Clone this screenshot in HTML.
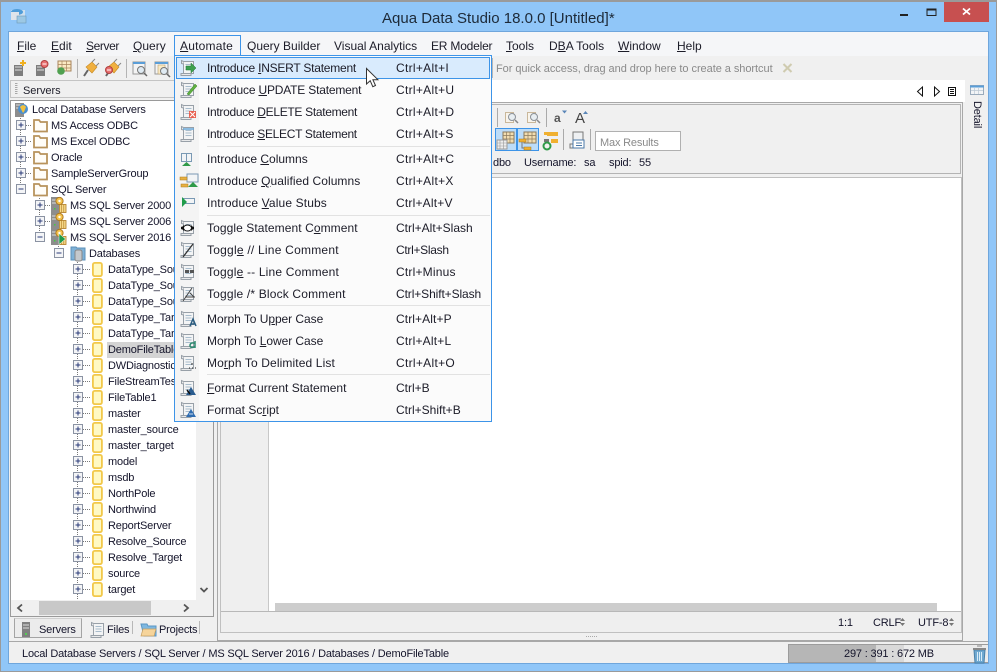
<!DOCTYPE html>
<html><head><meta charset="utf-8"><title>Aqua Data Studio</title>
<style>
html,body{margin:0;padding:0;background:#90c6f8}
#w{position:relative;width:997px;height:672px;overflow:hidden;background:#90c6f8;font-family:"Liberation Sans",sans-serif;font-size:12px;color:#1c1c28}
.b{position:absolute;box-sizing:border-box}
.t{position:absolute;white-space:nowrap;line-height:16px;height:16px}
.tr{font-size:11px;letter-spacing:-.17px;color:#14142a;margin-top:1px}
.q{font-size:11px;letter-spacing:-.05px;margin-top:1px}
svg.o{position:absolute;left:0;top:0}
u{text-decoration:underline;text-underline-offset:1px}
</style></head><body><div id="w">
<div class="b" style="left:0;top:0;width:997px;height:672px;border:1px solid #9a9a9a;border-top-width:2px"></div>
<div class="b" style="left:8px;top:31px;width:981px;height:633px;background:#f0f0f0;border:1px solid #6fa6dc"></div>
<div class="b" style="left:9px;top:32px;width:979px;height:24px;background:#f5f6f8"></div>
<div class="b" style="left:944px;top:2px;width:45px;height:20px;background:#c75050"></div>
<div class="t" style="left:382px;top:10px;font-size:15px;line-height:18px;height:18px;color:#1d2a38">Aqua Data Studio 18.0.0 [Untitled]*</div>

<div class="b" style="left:10px;top:80px;width:204px;height:18px;background:#f0f0f0;border:1px solid #c4c4c4"></div>
<div class="b" style="left:10px;top:100px;width:204px;height:517px;background:#f0f0f0;border:1px solid #9a9a9a"></div>
<div class="b" style="left:11px;top:101px;width:185px;height:499px;background:#fff"></div>
<div class="b" style="left:39px;top:601px;width:112px;height:14px;background:#c8c8c8"></div>
<div class="b" style="left:107px;top:342px;width:80px;height:16px;background:#d4d4d4"></div>

<div class="b" style="left:220px;top:80px;width:745px;height:22px;background:#fff"></div>
<div class="b" style="left:217px;top:102px;width:746px;height:539px;border:1px solid #a8a8a8"></div>
<div class="b" style="left:219px;top:104px;width:742px;height:70px;border:1px solid #b4b4b4"></div>
<div class="b" style="left:220px;top:177px;width:742px;height:456px;background:#efefef;border:1px solid #c0c0c0"></div>
<div class="b" style="left:268px;top:178px;width:693px;height:433px;background:#fff;border-left:1px solid #c8c8c8"></div>
<div class="b" style="left:221px;top:611px;width:740px;height:1px;background:#b8b8b8"></div>
<div class="b" style="left:275px;top:603px;width:662px;height:8px;background:#cdcdcd"></div>
<div class="b" style="left:595px;top:131px;width:86px;height:20px;background:#fff;border:1px solid #b0b0b0"></div>
<div class="b" style="left:495px;top:128px;width:22px;height:23px;background:#bcdcf8;border:1px solid #3d94e8"></div>
<div class="b" style="left:517px;top:128px;width:22px;height:23px;background:#bcdcf8;border:1px solid #3d94e8"></div>

<div class="b" style="left:14px;top:618px;width:68px;height:20px;background:#ececec;border:1px solid #a4a4a4;border-top-color:#d0d0d0"></div>
<div class="b" style="left:9px;top:641px;width:979px;height:1px;background:#a8a8a8"></div>
<div class="b" style="left:788px;top:644px;width:200px;height:19px;background:#ececec;border-top:1px solid #9c9c9c;border-bottom:1px solid #9c9c9c;border-left:1px solid #9c9c9c"></div>
<div class="b" style="left:789px;top:645px;width:87px;height:17px;background:#b6b6b6"></div>
<div class="b" style="left:876px;top:645px;width:28px;height:17px;background:#d9d9d9"></div>

<svg class="o" width="997" height="672" viewBox="0 0 997 672" fill="none">
<defs>
<g id="p"><rect x=".5" y=".5" width="9" height="9" fill="#f4f5f7" stroke="#8b93a3"/><path d="M2.5 5h5M5 2.5v5" stroke="#2a3a78"/></g>
<g id="m"><rect x=".5" y=".5" width="9" height="9" fill="#f4f5f7" stroke="#8b93a3"/><path d="M2.5 5h5" stroke="#2a3a78"/></g>
<g id="f"><path d="M1 2h5l1.500 2H14v9.500H1z" fill="#fffdf8" stroke="#b8935c" stroke-width="1.800"/></g>
<g id="d"><rect x=".9" y=".9" width="9" height="13.200" rx="1.800" fill="#fff9c4" stroke="#f2c84a" stroke-width="1.800"/></g>
<g id="s"><rect x="0" y="1" width="8" height="16" fill="#8d8d8d"/><path d="M1 4h6M1 7h6" stroke="#ddd"/><rect x="3" y="12" width="1.500" height="1.500" fill="#4c4"/><circle cx="8.500" cy="5" r="3.600" fill="#f5c34c" stroke="#b07a20"/><circle cx="8.500" cy="5" r="1.200" fill="#fff"/><rect x="8.500" y="8.500" width="6.500" height="8" fill="#f6d98a" stroke="#b07a20" stroke-width=".8"/><path d="M10.700 8.500v8M12.800 8.500v8" stroke="#b07a20" stroke-width=".6"/></g>
<g id="c"><path d="M3.500 2.500h10v12h-10z" fill="#f3f4f5" stroke="#98a0a8"/><path d="M1 14.500h10v2H1zM3.500 2.500l-2-1v3l2 .5" fill="#e8e9ea" stroke="#98a0a8"/><path d="M5.500 5.500h6M5.500 8h6M5.500 10.500h6" stroke="#a8bccc"/></g>
</defs>

<!-- window controls -->
<path d="M900 15h8" stroke="#222" stroke-width="2"/>
<rect x="927" y="9" width="9" height="6.500" stroke="#222"/><path d="M926.500 9.500h10" stroke="#222" stroke-width="2"/>
<path d="M963 8.500l7 6M970 8.500l-7 6" stroke="#fff" stroke-width="1.800"/>
<!-- app icon -->
<path d="M11 10h14v7H11z" fill="#cfe0ee"/><ellipse cx="17" cy="12" rx="6" ry="3" fill="#4f9cd8"/><rect x="11" y="12" width="8" height="8" fill="#dfe4ea"/><rect x="17" y="16" width="9" height="7" fill="#9cc8e4" stroke="#6d98b8" stroke-width=".6"/>

<!-- main toolbar -->
<rect x="14" y="65" width="9" height="11" fill="#7d7d7d"/><path d="M15 67h7M15 70h7" stroke="#ddd"/><path d="M20 63h6M23 60v6" stroke="#f0b020" stroke-width="2"/>
<rect x="36" y="65" width="9" height="11" fill="#7d7d7d"/><path d="M37 67h7M37 70h7" stroke="#ddd"/><circle cx="44.500" cy="64" r="3.500" fill="#e87070" stroke="#b04040"/><path d="M42.500 64h4" stroke="#fff"/>
<rect x="58" y="61" width="13" height="10" fill="#fbeac4" stroke="#a8845c"/><path d="M62 61v10M66.500 61v10M58 64.500h13M58 68h13" stroke="#a8845c" stroke-width=".7"/><circle cx="61" cy="71" r="3.800" fill="#50a050"/>
<path d="M77.500 59v19" stroke="#b4b4b4"/>
<path d="M84 76l4-6" stroke="#666" stroke-width="2"/><path d="M86 67l6-5 5 5-5 6z" fill="#f0b040" stroke="#c88a20" stroke-width=".6"/><path d="M92 62l3-3M96 66l3-3" stroke="#888"/>
<path d="M106 76l4-6" stroke="#666" stroke-width="2"/><path d="M108 67l6-5 5 5-5 6z" fill="#f0b040" stroke="#c88a20" stroke-width=".6"/><path d="M114 62l3-3M118 66l3-3" stroke="#888"/><circle cx="109" cy="70" r="3.500" fill="#e87070" stroke="#b04040"/><path d="M107 70h4" stroke="#fff"/>
<path d="M126.500 59v19" stroke="#b4b4b4"/>
<rect x="133" y="62" width="12" height="12" fill="#f4f4f4" stroke="#999"/><path d="M133 63h12" stroke="#5a9ed8" stroke-width="2"/><circle cx="141" cy="70" r="3.500" fill="#dfeaf2" stroke="#777"/><path d="M144 73l3 3" stroke="#666" stroke-width="1.500"/>
<rect x="155" y="62" width="13" height="12" fill="#f4f4f4" stroke="#999"/><path d="M155 63h13" stroke="#5a9ed8" stroke-width="2"/><rect x="158" y="65" width="7" height="9" fill="#fbeac4" stroke="#b8a070" stroke-width=".6"/><circle cx="164" cy="71" r="3.500" fill="#dfeaf2" stroke="#777"/><path d="M167 74l3 3" stroke="#666" stroke-width="1.500"/>
<path d="M492.500 58v20" stroke="#b8b8b8"/>
<path d="M783.500 64l8 8M791.500 64l-8 8" stroke="#cfcbb0" stroke-width="2"/>

<!-- servers grip -->
<path d="M15 83.500h2.500M15 85.500h2.500M15 87.500h2.500M15 89.500h2.500M15 91.500h2.500M15 93.500h2.500" stroke="#a8a8a8"/>

<!-- tree lines -->
<g stroke="#777" stroke-dasharray="1 1">
<path d="M20.500 116v74M39.500 198v40M58.500 246v8M77.500 262v338"/>
<path d="M26 125.500h6M26 141.500h6M26 157.500h6M26 173.500h6M45 205.500h6M45 221.500h6M83 269.500h7M83 285.500h7M83 301.500h7M83 317.500h7M83 333.500h7M83 349.500h7M83 365.500h7M83 381.500h7M83 397.500h7M83 413.500h7M83 429.500h7M83 445.500h7M83 461.500h7M83 477.500h7M83 493.500h7M83 509.500h7M83 525.500h7M83 541.500h7M83 557.500h7M83 573.500h7M83 589.500h7"/>
</g>
<!-- root icon -->
<rect x="15" y="103" width="9" height="14" fill="#8d8d8d"/><path d="M16 105h7M16 108h7" stroke="#ddd"/><circle cx="23" cy="109" r="5" fill="#4a90d0"/><path d="M20 107c2-3 5-2 6 0-1 2-1 4-3 6-1-2-2-4-3-6z" fill="#f0c040"/>
<use href="#p" x="16" y="120"/><use href="#f" x="33" y="118"/>
<use href="#p" x="16" y="136"/><use href="#f" x="33" y="134"/>
<use href="#p" x="16" y="152"/><use href="#f" x="33" y="150"/>
<use href="#p" x="16" y="168"/><use href="#f" x="33" y="166"/>
<use href="#m" x="16" y="184"/><use href="#f" x="33" y="182"/>
<use href="#p" x="35" y="200"/><use href="#s" x="51" y="196"/>
<use href="#p" x="35" y="216"/><use href="#s" x="51" y="212"/>
<use href="#m" x="35" y="232"/><use href="#s" x="51" y="228"/><path d="M59 233.500l6.500 5.500-6.500 5.500z" fill="#1f9c4a" stroke="#fff" stroke-width=".5"/>
<use href="#m" x="54" y="248"/>
<path d="M71 247h5l1 1h8v12H71z" fill="#7fb2d8" stroke="#5d90b8"/><rect x="75" y="250" width="7" height="11" rx="2" fill="#c4c8cc" stroke="#888"/>
<g id="rows">
<use href="#p" x="73" y="264"/><use href="#d" x="92" y="262"/>
<use href="#p" x="73" y="280"/><use href="#d" x="92" y="278"/>
<use href="#p" x="73" y="296"/><use href="#d" x="92" y="294"/>
<use href="#p" x="73" y="312"/><use href="#d" x="92" y="310"/>
<use href="#p" x="73" y="328"/><use href="#d" x="92" y="326"/>
<use href="#p" x="73" y="344"/><use href="#d" x="92" y="342"/>
<use href="#p" x="73" y="360"/><use href="#d" x="92" y="358"/>
<use href="#p" x="73" y="376"/><use href="#d" x="92" y="374"/>
<use href="#p" x="73" y="392"/><use href="#d" x="92" y="390"/>
<use href="#p" x="73" y="408"/><use href="#d" x="92" y="406"/>
<use href="#p" x="73" y="424"/><use href="#d" x="92" y="422"/>
<use href="#p" x="73" y="440"/><use href="#d" x="92" y="438"/>
<use href="#p" x="73" y="456"/><use href="#d" x="92" y="454"/>
<use href="#p" x="73" y="472"/><use href="#d" x="92" y="470"/>
<use href="#p" x="73" y="488"/><use href="#d" x="92" y="486"/>
<use href="#p" x="73" y="504"/><use href="#d" x="92" y="502"/>
<use href="#p" x="73" y="520"/><use href="#d" x="92" y="518"/>
<use href="#p" x="73" y="536"/><use href="#d" x="92" y="534"/>
<use href="#p" x="73" y="552"/><use href="#d" x="92" y="550"/>
<use href="#p" x="73" y="568"/><use href="#d" x="92" y="566"/>
<use href="#p" x="73" y="584"/><use href="#d" x="92" y="582"/>
</g>
<!-- scroll arrows -->
<path d="M200.500 588l3.500 3.500 3.500-3.500" stroke="#555" stroke-width="1.800"/>
<path d="M22 604.500l-4 3.500 4 3.500M184 604.500l4 3.500-4 3.500" stroke="#555" stroke-width="1.800"/>
<!-- tabs -->
<rect x="22" y="622" width="8" height="15" fill="#808080"/><path d="M23 625h6M23 628h6" stroke="#ddd"/><rect x="25" y="633" width="2" height="2" fill="#5c5"/>
<use href="#c" x="90" y="621"/>
<path d="M132.500 621v13M199.500 621v13" stroke="#b8b8b8"/>
<path d="M141 624h6l1 2h8v10h-12z" fill="#7fb8e0" stroke="#5a96c4"/><path d="M141 636l2-7h13l-2 7z" fill="#f6d49a" stroke="#c8a060" stroke-width=".7"/>
<!-- nav -->
<path d="M922.500 87v9l-5-4.500zM934.500 87v9l5-4.500z" fill="#fff" stroke="#111"/>
<rect x="948.500" y="87.500" width="7" height="8" fill="#fff" stroke="#111"/><path d="M950 89.500h4M950 91.500h4M950 93.500h4" stroke="#111"/>
<!-- detail -->
<rect x="970.500" y="85.500" width="13" height="9" fill="#f2f4f6" stroke="#9ab"/><path d="M970 86.500h14" stroke="#5a9ed8" stroke-width="2"/><path d="M974.500 88v6M978.500 88v6M971 90.500h12" stroke="#bcc8d4" stroke-width=".7"/>
<!-- editor toolbar -->
<path d="M497.500 108v19M546.500 108v19" stroke="#aaa"/>
<g stroke="#c9b79a" fill="#f8f4ec"><rect x="505.500" y="112.500" width="8" height="10"/><rect x="527.500" y="112.500" width="8" height="10"/></g>
<g fill="#e8eef2" stroke="#8a9098"><circle cx="512" cy="117" r="3.500"/><circle cx="534" cy="117" r="3.500"/></g><path d="M515 120l3 3M537 120l3 3" stroke="#888" stroke-width="1.500"/>
<path d="M562 110.500h5l-2.500 3zM583 114l2.500-3 2.500 3z" fill="#5a86b8"/>
<!-- row 2 icons -->
<g id="tb"><rect x="503" y="132" width="11" height="11" fill="#f2ddb0" stroke="#8c7a5c"/><path d="M506.500 132v11M510 132v11M503 135.500h11M503 139h11" stroke="#8c7a5c" stroke-width=".7"/><rect x="497" y="140" width="10" height="9" fill="#eee" stroke="#999"/><path d="M500 140v9M503.500 140v9M497 143h10M497 146h10" stroke="#999" stroke-width=".6"/></g>
<rect x="524" y="132" width="12" height="11" fill="#f2ddb0" stroke="#8c7a5c"/><path d="M528 132v11M532 132v11M524 135.500h12M524 139h12" stroke="#8c7a5c" stroke-width=".7"/><rect x="519" y="139" width="7" height="3" fill="#f0b030" stroke="#a87820" stroke-width=".5"/><rect x="524" y="147" width="7" height="3" fill="#f0b030" stroke="#a87820" stroke-width=".5"/><path d="M522 142v6h2" stroke="#777"/>
<rect x="544" y="132" width="7" height="3" fill="#f0b030"/><rect x="547" y="132" width="11" height="4" fill="#f0b030"/><rect x="551" y="139" width="7" height="4" fill="#f0b030"/><rect x="544" y="139" width="5" height="3" fill="#777"/><circle cx="547" cy="146" r="3.500" stroke="#2f9a48" stroke-width="2"/>
<path d="M563.500 129v21M590.500 129v21" stroke="#aaa"/>
<path d="M573 132h10v16h-13v-4h3z" fill="#eef0f2" stroke="#777"/><rect x="573" y="140" width="11" height="8" fill="#fff" stroke="#4a78a8"/><path d="M576 143h6M576 145.500h6" stroke="#4a78a8"/>
<!-- status -->
<path d="M974 650h11l-1 13h-9z" fill="#6fa8d0" stroke="#4a80a8"/><path d="M973 649h13" stroke="#888" stroke-width="2"/><path d="M977 646h5" stroke="#888"/><path d="M977.500 652v9M979.500 652v9M981.500 652v9" stroke="#d8ecf8"/>
<path d="M586 636.500h12" stroke="#aaa" stroke-dasharray="1 1"/>
<path d="M900 621l2.500-3 2.500 3zM900 623l2.500 3 2.500-3zM949 621l2.500-3 2.500 3zM949 623l2.500 3 2.500-3z" fill="#777"/>
</svg>

<div class="t q" style="left:23px;top:82px">Servers</div>
<div class="t" style="left:17px;top:38px"><u>F</u>ile</div>
<div class="t" style="left:51px;top:38px"><u>E</u>dit</div>
<div class="t" style="left:86px;top:38px;letter-spacing:-.4px"><u>S</u>erver</div>
<div class="t" style="left:133px;top:38px"><u>Q</u>uery</div>
<div class="t" style="left:247px;top:38px">Query Builder</div>
<div class="t" style="left:334px;top:38px">Visual Analytics</div>
<div class="t" style="left:431px;top:38px;letter-spacing:-.2px">ER Modeler</div>
<div class="t" style="left:506px;top:38px"><u>T</u>ools</div>
<div class="t" style="left:549px;top:38px">D<u>B</u>A Tools</div>
<div class="t" style="left:618px;top:38px"><u>W</u>indow</div>
<div class="t" style="left:677px;top:38px"><u>H</u>elp</div>
<div class="t q" style="left:496px;top:60px;color:#8a8a8a">For quick access, drag and drop here to create a shortcut</div>

<div class="t tr" style="left:32px;top:101px">Local Database Servers</div>
<div class="t tr" style="left:51px;top:117px">MS Access ODBC</div>
<div class="t tr" style="left:51px;top:133px">MS Excel ODBC</div>
<div class="t tr" style="left:51px;top:149px">Oracle</div>
<div class="t tr" style="left:51px;top:165px">SampleServerGroup</div>
<div class="t tr" style="left:51px;top:181px">SQL Server</div>
<div class="t tr" style="left:70px;top:197px">MS SQL Server 2000</div>
<div class="t tr" style="left:70px;top:213px">MS SQL Server 2006</div>
<div class="t tr" style="left:70px;top:229px">MS SQL Server 2016</div>
<div class="t tr" style="left:89px;top:245px">Databases</div>
<div class="t tr" style="left:108px;top:261px">DataType_Source</div>
<div class="t tr" style="left:108px;top:277px">DataType_Source</div>
<div class="t tr" style="left:108px;top:293px">DataType_Source</div>
<div class="t tr" style="left:108px;top:309px">DataType_Target</div>
<div class="t tr" style="left:108px;top:325px">DataType_Target</div>
<div class="t tr" style="left:108px;top:341px">DemoFileTable</div>
<div class="t tr" style="left:108px;top:357px">DWDiagnostics</div>
<div class="t tr" style="left:108px;top:373px">FileStreamTest</div>
<div class="t tr" style="left:108px;top:389px">FileTable1</div>
<div class="t tr" style="left:108px;top:405px">master</div>
<div class="t tr" style="left:108px;top:421px">master_source</div>
<div class="t tr" style="left:108px;top:437px">master_target</div>
<div class="t tr" style="left:108px;top:453px">model</div>
<div class="t tr" style="left:108px;top:469px">msdb</div>
<div class="t tr" style="left:108px;top:485px">NorthPole</div>
<div class="t tr" style="left:108px;top:501px">Northwind</div>
<div class="t tr" style="left:108px;top:517px">ReportServer</div>
<div class="t tr" style="left:108px;top:533px">Resolve_Source</div>
<div class="t tr" style="left:108px;top:549px">Resolve_Target</div>
<div class="t tr" style="left:108px;top:565px">source</div>
<div class="t tr" style="left:108px;top:581px">target</div>

<div class="t tr" style="left:39px;top:621px">Servers</div>
<div class="t tr" style="left:107px;top:621px">Files</div>
<div class="t tr" style="left:159px;top:621px">Projects</div>
<div class="t tr" style="left:22px;top:645px">Local Database Servers / SQL Server / MS SQL Server 2016 / Databases / DemoFileTable</div>
<div class="t tr" style="left:844px;top:645px">297 : 391 : 672 MB</div>
<div class="t tr" style="left:838px;top:614px">1:1</div>
<div class="t tr" style="left:873px;top:614px">CRLF</div>
<div class="t tr" style="left:918px;top:614px">UTF-8</div>
<div class="t" style="left:554px;top:110px;font-weight:bold;color:#555">a</div>
<div class="t" style="left:575px;top:111px;font-size:15px;color:#444">A</div>
<div class="t tr" style="left:600px;top:134px;color:#8a8a8a">Max Results</div>
<div class="t tr" style="left:493px;top:154px">dbo</div>
<div class="t tr" style="left:524px;top:154px">Username:</div>
<div class="t tr" style="left:584px;top:154px">sa</div>
<div class="t tr" style="left:609px;top:154px">spid:</div>
<div class="t tr" style="left:639px;top:154px">55</div>
<div class="t tr" style="left:977px;top:100px;transform-origin:0 0;transform:translateX(8px) rotate(90deg)">Detail</div>

<!-- Automate menu -->
<div class="b" style="left:174px;top:35px;width:67px;height:21px;background:#f5f6f8;border:1px solid #3d94e8;border-bottom:none"></div>
<div class="t" style="left:180px;top:38px;letter-spacing:.2px"><u>A</u>utomate</div>
<div class="b" style="left:174px;top:55px;width:318px;height:367px;background:#fbfbfb;border:1px solid #3d94e8"></div>
<div class="b" style="left:175px;top:56px;width:24px;height:365px;background:#f4f4f4"></div>
<div class="b" style="left:176px;top:57px;width:314px;height:22px;background:#d9ebfd;border:1px solid #3d94e8"></div>
<div class="b" style="left:207px;top:146px;width:283px;height:1px;background:#e2e2e2"></div>
<div class="b" style="left:207px;top:215px;width:283px;height:1px;background:#e2e2e2"></div>
<div class="b" style="left:207px;top:305px;width:283px;height:1px;background:#e2e2e2"></div>
<div class="b" style="left:207px;top:374px;width:283px;height:1px;background:#e2e2e2"></div>
<svg class="o" width="997" height="672" viewBox="0 0 997 672" fill="none">
<use href="#c" x="180" y="59"/><path d="M186 66h5v-3l5 5-5 5v-3h-5z" fill="#3da050" stroke="#1e7a34" stroke-width=".5"/>
<use href="#c" x="180" y="81"/><path d="M187 94l8-10 2 2-8 9z" fill="#60b040" stroke="#388028" stroke-width=".5"/>
<use href="#c" x="180" y="103"/><rect x="189" y="111" width="7" height="7" fill="#e86050"/><path d="M190 112l5 5M195 112l-5 5" stroke="#fff"/>
<use href="#c" x="180" y="125"/><path d="M183 129h11" stroke="#6aa8d8" stroke-width="1.500"/>
<rect x="181.500" y="153.500" width="10" height="8" fill="#f2f4f6" stroke="#7a99b4"/><path d="M186.500 154v7" stroke="#7a99b4"/><path d="M182 166l4.500-4 4.500 4z" fill="#2f9a48"/>
<rect x="187" y="174" width="11" height="8" fill="#f2f4f6" stroke="#7a99b4"/><rect x="180" y="177" width="7" height="3" fill="#e8b040" stroke="#a87820" stroke-width=".5"/><rect x="181" y="184" width="7" height="3" fill="#e8b040" stroke="#a87820" stroke-width=".5"/><path d="M188 187l5-5 5 5z" fill="#2f9a48"/>
<rect x="182.500" y="198.500" width="12" height="5" fill="#f2f4f6" stroke="#7a99b4"/><path d="M182 197v10l5-5z" fill="#1f9c4a"/>
<use href="#c" x="180" y="219"/><path d="M181 228l3-3 0 6zM194 228l-3-3 0 6z" fill="#111"/><path d="M181 228h13" stroke="#111" stroke-width="2.500"/><ellipse cx="187.500" cy="228" rx="4" ry="3" fill="#fff" stroke="#111"/>
<use href="#c" x="180" y="241"/><path d="M183 257l10-13" stroke="#333" stroke-width="1.300"/>
<use href="#c" x="180" y="263"/><rect x="185" y="270" width="4" height="3" fill="#555"/><rect x="190" y="270" width="4" height="3" fill="#555"/>
<use href="#c" x="180" y="285"/><path d="M183 301l9-13M185 297h10M190 293l4 4" stroke="#444"/>
<use href="#c" x="180" y="310"/><path d="M190 326l3-7 3 7M191 324h4" stroke="#2a5c80" stroke-width="1.500"/>
<use href="#c" x="180" y="332"/><path d="M195 341v7M195 343.500c-3-1.500-5 0-5 2s3 3 5 .5" stroke="#2f8a70" stroke-width="1.500"/>
<use href="#c" x="180" y="354"/><path d="M189 368h1M192 368h1M195 368h1M192 363v2" stroke="#222"/>
<use href="#c" x="180" y="379"/><path d="M186 395l5-8 5 8z" fill="#2a5c90"/><path d="M187 390l3 4" stroke="#111" stroke-width="1.500"/>
<use href="#c" x="180" y="401"/><path d="M186 417l5-8 5 8z" fill="#2f6cb0"/><path d="M189 414h4" stroke="#cde"/>
<!-- cursor -->
<path d="M366.500 68.500v15.500l3.700-3.300 2.600 6 2.700-1.200-2.600-5.800h5z" fill="#fff" stroke="#333"/>
</svg>
<div class="t" style="left:207px;top:60px;letter-spacing:-.23px">Introduce <u>I</u>NSERT Statement</div><div class="t" style="left:396px;top:60px;letter-spacing:.3px">Ctrl+Alt+I</div>
<div class="t" style="left:207px;top:82px;letter-spacing:-.19px">Introduce <u>U</u>PDATE Statement</div><div class="t" style="left:396px;top:82px;letter-spacing:.3px">Ctrl+Alt+U</div>
<div class="t" style="left:207px;top:104px;letter-spacing:-.31px">Introduce <u>D</u>ELETE Statement</div><div class="t" style="left:396px;top:104px;letter-spacing:.3px">Ctrl+Alt+D</div>
<div class="t" style="left:207px;top:126px;letter-spacing:-.31px">Introduce <u>S</u>ELECT Statement</div><div class="t" style="left:396px;top:126px;letter-spacing:.3px">Ctrl+Alt+S</div>
<div class="t" style="left:207px;top:151px">Introduce <u>C</u>olumns</div><div class="t" style="left:396px;top:151px;letter-spacing:.3px">Ctrl+Alt+C</div>
<div class="t" style="left:207px;top:173px;letter-spacing:.07px">Introduce <u>Q</u>ualified Columns</div><div class="t" style="left:396px;top:173px;letter-spacing:.3px">Ctrl+Alt+X</div>
<div class="t" style="left:207px;top:195px;letter-spacing:.13px">Introduce <u>V</u>alue Stubs</div><div class="t" style="left:396px;top:195px;letter-spacing:.2px">Ctrl+Alt+V</div>
<div class="t" style="left:207px;top:220px;letter-spacing:.08px">Toggle Statement C<u>o</u>mment</div><div class="t" style="left:396px;top:220px">Ctrl+Alt+Slash</div>
<div class="t" style="left:207px;top:242px;letter-spacing:.23px">Toggl<u>e</u> // Line Comment</div><div class="t" style="left:396px;top:242px;letter-spacing:-.3px">Ctrl+Slash</div>
<div class="t" style="left:207px;top:264px;letter-spacing:.18px">Toggl<u>e</u> -- Line Comment</div><div class="t" style="left:396px;top:264px;letter-spacing:.2px">Ctrl+Minus</div>
<div class="t" style="left:207px;top:286px;letter-spacing:.17px">Toggle /* Block Comment</div><div class="t" style="left:396px;top:286px;letter-spacing:-.1px">Ctrl+Shift+Slash</div>
<div class="t" style="left:207px;top:311px;letter-spacing:-.05px">Morph To U<u>p</u>per Case</div><div class="t" style="left:396px;top:311px;letter-spacing:.1px">Ctrl+Alt+P</div>
<div class="t" style="left:207px;top:333px;letter-spacing:-.05px">Morph To <u>L</u>ower Case</div><div class="t" style="left:396px;top:333px;letter-spacing:.2px">Ctrl+Alt+L</div>
<div class="t" style="left:207px;top:355px;letter-spacing:.12px">Mo<u>r</u>ph To Delimited List</div><div class="t" style="left:396px;top:355px;letter-spacing:.3px">Ctrl+Alt+O</div>
<div class="t" style="left:207px;top:380px"><u>F</u>ormat Current Statement</div><div class="t" style="left:396px;top:380px">Ctrl+B</div>
<div class="t" style="left:207px;top:402px">Format Sc<u>r</u>ipt</div><div class="t" style="left:396px;top:402px">Ctrl+Shift+B</div>
</div></body></html>
